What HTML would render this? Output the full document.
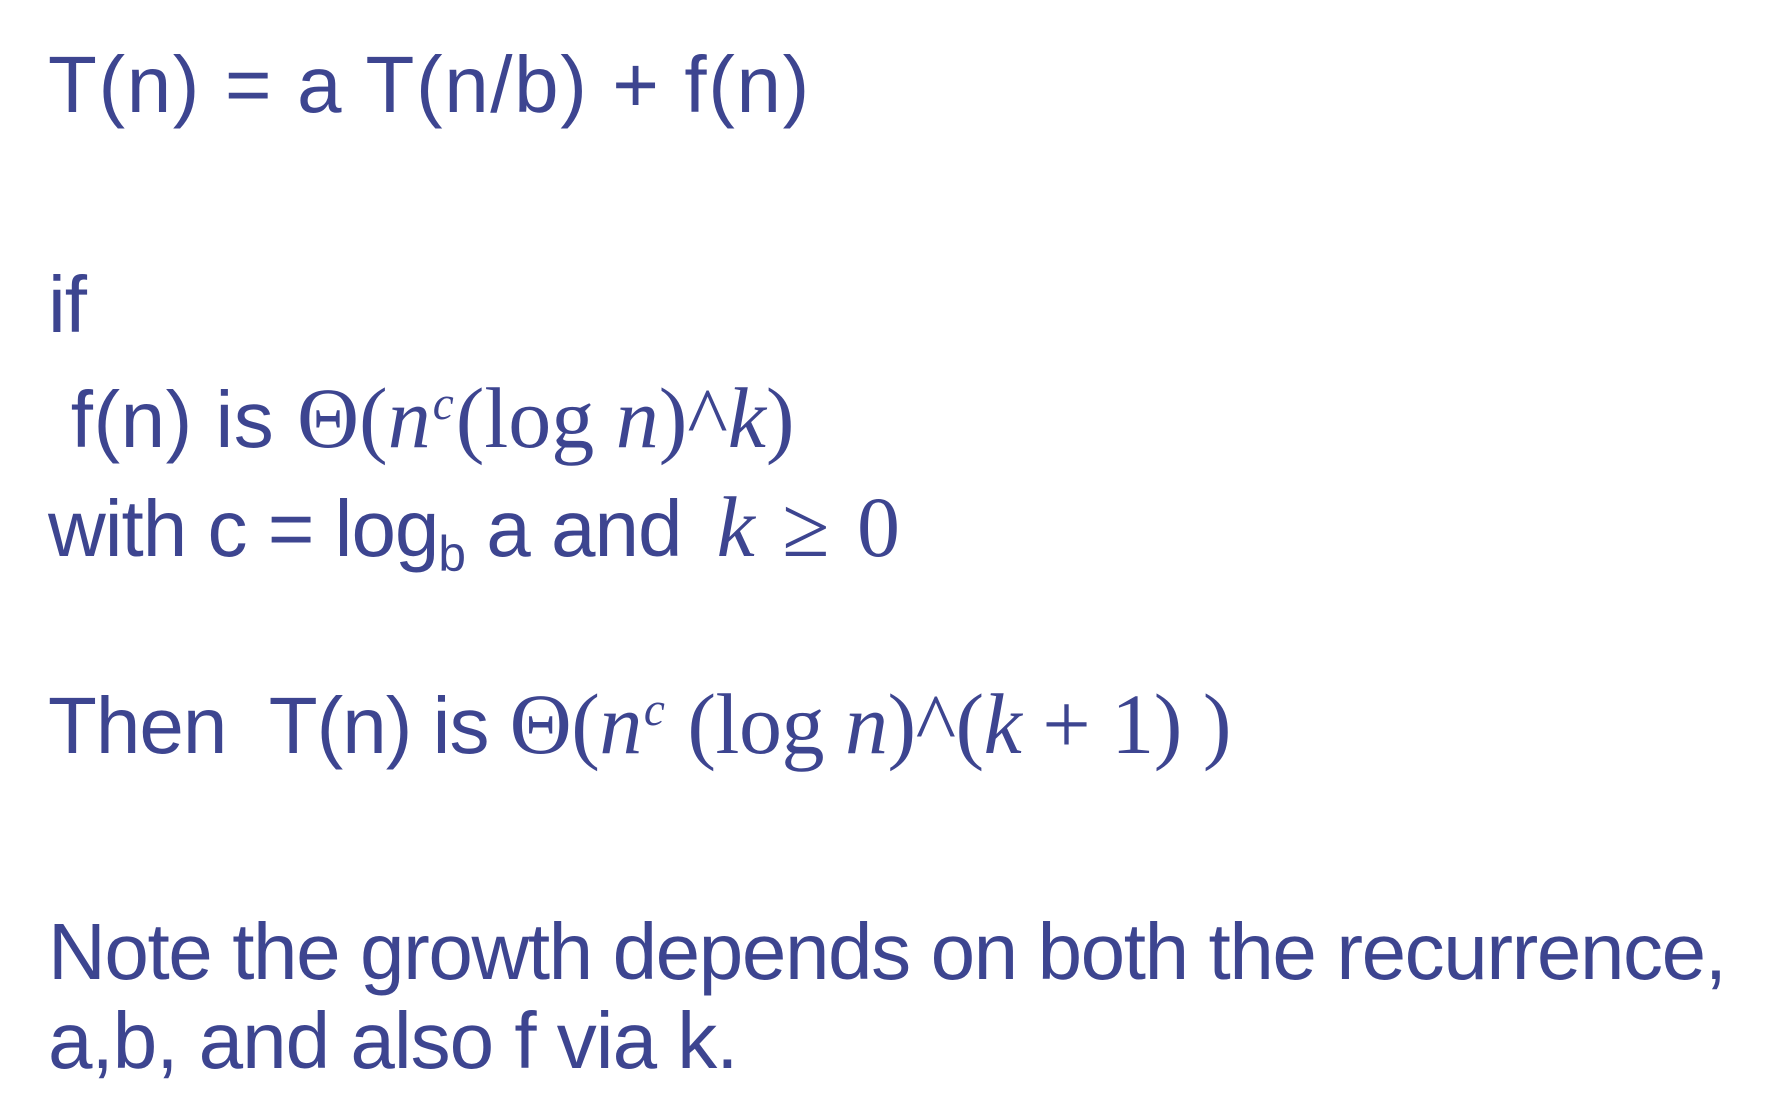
<!DOCTYPE html>
<html><head><meta charset="utf-8"><style>
body{margin:0;width:1792px;height:1106px;background:#fff;overflow:hidden;position:relative;color:#3d4590;font-family:"Liberation Sans",sans-serif;}
.l{position:absolute;left:48px;font-size:80px;line-height:80px;white-space:nowrap;letter-spacing:-1px;}
.m{font-family:"Liberation Serif",serif;font-size:86px;letter-spacing:0px;}
.i{font-style:italic;}
sup{font-size:55%;vertical-align:0;position:relative;top:-0.6em;margin:0 2px 0 2px;}
sub{font-size:62%;vertical-align:0;position:relative;top:0.3em;}
</style></head><body>
<div class="l" style="top:45px;letter-spacing:1.6px">T(n) = a T(n/b) + f(n)</div>
<div class="l" style="top:265px">if</div>
<div class="l" style="top:378px;letter-spacing:0.5px">&nbsp;f(n) is <span class="m">Θ(<span class="i">n</span><sup class="i">c</sup>(log <span class="i">n</span>)^<span class="i">k</span>)</span></div>
<div class="l" style="top:487px">with c = log<sub>b</sub> a and <span class="m" style="margin-left:14px;letter-spacing:3px"><span class="i">k</span> ≥ 0</span></div>
<div class="l" style="top:684px">Then &nbsp;T(n) is <span class="m" style="letter-spacing:-0.5px">Θ(<span class="i">n</span><sup class="i">c</sup> (log <span class="i">n</span>)^(<span class="i">k</span> + 1) )</span></div>
<div class="l" style="top:912px;letter-spacing:-1.4px">Note the growth depends on both the recurrence,</div>
<div class="l" style="top:1001px">a,b, and also f via k.</div>
</body></html>
